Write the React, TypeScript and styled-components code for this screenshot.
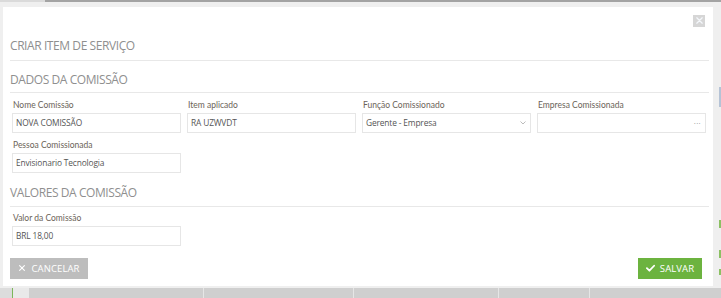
import React from "react";
import styled, { createGlobalStyle } from "styled-components";

const Global = createGlobalStyle`
  html, body { margin: 0; padding: 0; }
  body { background: #eeeeee; font-family: "Open Sans", "DejaVu Sans", sans-serif; }
  * { box-sizing: border-box; }
`;

const Page = styled.div`
  width: 721px;
  height: 298px;
  overflow: hidden;
  background: #efefef;
  display: flex;
  flex-direction: column;
`;

const TopStrip = styled.div`
  height: 2px;
  display: flex;
`;
const TopSeg = styled.div<{ $w?: number; $c: string }>`
  background: ${(p) => p.$c};
  ${(p) => (p.$w ? `width: ${p.$w}px;` : "flex: 1;")}
`;

const Middle = styled.div`
  display: flex;
  padding-top: 5px;
  padding-left: 3px;
  height: 286px;
`;

const Modal = styled.div`
  width: 710px;
  height: 279px;
  background: #ffffff;
  padding: 8px 4px 7px 7px;
  display: flex;
  flex-direction: column;
`;

const CloseRow = styled.div`
  display: flex;
  justify-content: flex-end;
  padding-right: 4px;
`;

const CloseBtn = styled.div`
  width: 12px;
  height: 12px;
  background: #d6d6d6;
  display: flex;
  align-items: center;
  justify-content: center;
`;

const Heading = styled.div<{ $pt: number; $pb: number }>`
  padding-top: ${(p) => p.$pt}px;
  padding-bottom: ${(p) => p.$pb}px;
  border-bottom: 1px solid #e8e8e8;
  color: #8f8f8f;
  font-size: 12px;
  line-height: 16px;
  letter-spacing: -0.42px;
`;

const Grid = styled.div<{ $mt: number }>`
  display: grid;
  grid-template-columns: repeat(4, 169px);
  column-gap: 6px;
  row-gap: 7px;
  margin: ${(p) => p.$mt}px 0 0 2px;
`;

const Field = styled.div`
  display: flex;
  flex-direction: column;
`;

const Label = styled.div`
  font-family: "Lato", "Open Sans", sans-serif;
  font-size: 8.5px;
  line-height: 11px;
  color: #6b6358;
  padding-left: 1px;
  margin-bottom: 2px;
`;

const Input = styled.div`
  height: 20px;
  border: 1px solid #e6e6e6;
  padding: 0 4px 0 3px;
  font-size: 8.4px;
  letter-spacing: -0.15px;
  color: #555555;
  display: flex;
  align-items: center;
  justify-content: space-between;
`;

const Hint = styled.span`
  color: #888888;
  font-size: 8px;
  letter-spacing: 0.3px;
`;

const Buttons = styled.div`
  display: flex;
  justify-content: space-between;
  margin-top: 12px;
  padding-right: 7px;
`;

const Button = styled.div<{ $bg: string; $w: number }>`
  width: ${(p) => p.$w}px;
  height: 21px;
  background: ${(p) => p.$bg};
  color: #ffffff;
  font-size: 9.5px;
  display: flex;
  align-items: center;
  justify-content: center;
  gap: 5px;
  letter-spacing: 0.1px;
`;

const RightBar = styled.div`
  margin-left: 3px;
  width: 5px;
  display: flex;
  flex-direction: column;
  align-items: flex-end;
`;

const Mark = styled.div<{ $c: string; $h: number; $mt: number }>`
  width: 2px;
  height: ${(p) => p.$h}px;
  margin-top: ${(p) => p.$mt}px;
  background: ${(p) => p.$c};
`;

const TableHead = styled.div`
  margin-top: 2px;
  height: 10px;
  display: flex;
`;

const HeadCell = styled.div<{ $w: number; $c: string; $line?: string }>`
  width: ${(p) => p.$w}px;
  background: ${(p) => p.$c};
  border-left: 1px solid ${(p) => p.$line || "transparent"};
  flex-shrink: 0;
`;

const XIcon = ({ size, color }: { size: number; color: string }) => (
  <svg width={size} height={size} viewBox="0 0 10 10">
    <path d="M2 2 L8 8 M8 2 L2 8" stroke={color} strokeWidth={1.4} strokeLinecap="round" />
  </svg>
);

const Check = () => (
  <svg width="9" height="8" viewBox="0 0 10 8">
    <path d="M1 4.2 L3.8 7 L9 1.5" stroke="#fff" strokeWidth={2} fill="none" strokeLinecap="round" strokeLinejoin="round" />
  </svg>
);

const Chevron = () => (
  <svg width="6" height="4" viewBox="0 0 6 4">
    <path d="M0.5 0.5 L3 3 L5.5 0.5" stroke="#aaa" strokeWidth={0.8} fill="none" />
  </svg>
);

export default function App() {
  return (
    <Page>
      <Global />
      <TopStrip>
        <TopSeg $w={45} $c="#dadada" />
        <TopSeg $c="#a3a3a3" />
      </TopStrip>
      <Middle>
        <Modal>
          <CloseRow>
            <CloseBtn>
              <XIcon size={9} color="#f4f7fb" />
            </CloseBtn>
          </CloseRow>
          <Heading $pt={11} $pb={6}>CRIAR ITEM DE SERVIÇO</Heading>
          <Heading $pt={11} $pb={4}>DADOS DA COMISSÃO</Heading>
          <Grid $mt={7}>
            <Field>
              <Label>Nome Comissão</Label>
              <Input>NOVA COMISSÃO</Input>
            </Field>
            <Field>
              <Label>Item aplicado</Label>
              <Input>RA UZWVDT</Input>
            </Field>
            <Field>
              <Label>Função Comissionado</Label>
              <Input>
                Gerente - Empresa
                <Chevron />
              </Input>
            </Field>
            <Field>
              <Label>Empresa Comissionada</Label>
              <Input>
                <span />
                <Hint>···</Hint>
              </Input>
            </Field>
            <Field>
              <Label>Pessoa Comissionada</Label>
              <Input>Envisionario Tecnologia</Input>
            </Field>
          </Grid>
          <Heading $pt={12} $pb={5}>VALORES DA COMISSÃO</Heading>
          <Grid $mt={6}>
            <Field>
              <Label>Valor da Comissão</Label>
              <Input>BRL 18,00</Input>
            </Field>
          </Grid>
          <Buttons>
            <Button $bg="#bdbdbd" $w={78}>
              <XIcon size={8} color="#ffffff" />
              CANCELAR
            </Button>
            <Button $bg="#6cb33f" $w={64}>
              <Check />
              SALVAR
            </Button>
          </Buttons>
        </Modal>
        <RightBar>
          <Mark $c="#b5c3d6" $h={20} $mt={80} />
          <Mark $c="#8cc063" $h={8} $mt={113} />
          <Mark $c="#8cc063" $h={8} $mt={22} />
          <Mark $c="#8cc063" $h={6} $mt={11} />
        </RightBar>
      </Middle>
      <TableHead>
        <HeadCell $w={12} $c="#dcdcdc" />
        <HeadCell $w={17} $c="#e9e9e9" $line="#7cb65a" />
        <HeadCell $w={174} $c="#cfcfcf" />
        <HeadCell $w={150} $c="#cfcfcf" $line="#e6e6e6" />
        <HeadCell $w={145} $c="#cfcfcf" $line="#e6e6e6" />
        <HeadCell $w={91} $c="#cfcfcf" $line="#e6e6e6" />
        <HeadCell $w={132} $c="#cfcfcf" $line="#e6e6e6" />
      </TableHead>
    </Page>
  );
}
